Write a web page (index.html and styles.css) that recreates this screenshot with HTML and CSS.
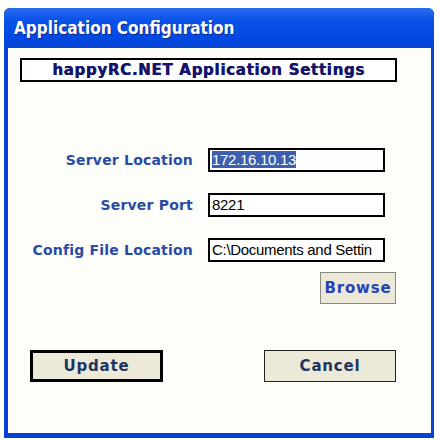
FILE: index.html
```html
<!DOCTYPE html>
<html>
<head>
    <meta charset="UTF-8" />
    <title>Application Configuration</title>
    <link rel="stylesheet" href="styles.css">
</head>
<body>
    <div class="window">
        <div class="title-bar">Application Configuration</div>
        <div class="content">
            <div class="heading">happyRC.NET Application Settings</div>

            <div class="form">
                <label class="label">Server Location</label>
                <div class="field"><span class="selected">172.16.10.13</span></div>

                <label class="label">Server Port</label>
                <div class="field">8221</div>

                <label class="label">Config File Location</label>
                <div class="field">C:\Documents and Settin</div>
            </div>

            <div class="browse-row">
                <button class="btn browse">Browse</button>
            </div>

            <div class="actions">
                <button class="btn default">Update</button>
                <button class="btn">Cancel</button>
            </div>
        </div>
    </div>
</body>
</html>
```

FILE: styles.css
```css
* {
    margin: 0;
    padding: 0;
    box-sizing: border-box;
}
body {
    background-color: white;
    font-family: "DejaVu Sans", Verdana, sans-serif;
}
.window {
    width: 430px;
    height: 430px;
    margin: 8px 0 0 4px;
    background-color: #0a3fd8;
    padding: 0 3px 5px 4px;
    border-radius: 6px 6px 0 0;
    display: flex;
    flex-direction: column;
}
.title-bar {
    height: 40px;
    margin: 0 -3px 0 -4px;
    padding: 0 0 0 10px;
    border-radius: 6px 6px 0 0;
    background: linear-gradient(#2a6cf0, #0a52e8 30%, #0048e0 80%, #0a44d0);
    color: white;
    font-family: "DejaVu Sans Condensed", "DejaVu Sans", sans-serif;
    font-weight: bold;
    font-size: 17px;
    line-height: 40px;
    text-shadow: 1px 1px 0 #0a2a8a;
}
.content {
    flex: 1;
    background-color: #fdfefa;
    padding-top: 10px;
}
.heading {
    width: 377px;
    height: 24px;
    margin-left: 12px;
    border: 2px solid black;
    background-color: white;
    color: #14146a;
    font-weight: bold;
    font-size: 15px;
    letter-spacing: 0.7px;
    line-height: 20px;
    text-align: center;
    text-shadow: 0.5px 0 0 #14146a;
}
.form {
    display: grid;
    grid-template-columns: 185px 177px;
    column-gap: 15px;
    row-gap: 21px;
    margin-top: 66px;
}
.label {
    text-align: right;
    color: #2a4aa6;
    font-weight: bold;
    font-size: 14px;
    line-height: 24px;
    letter-spacing: 0.2px;
}
.field {
    height: 24px;
    border: 2px solid black;
    background-color: white;
    padding-left: 2px;
    font-family: "Liberation Sans", Arial, sans-serif;
    font-size: 15px;
    letter-spacing: -0.3px;
    line-height: 20px;
    white-space: nowrap;
    overflow: hidden;
}
.selected {
    background-color: #3d5fae;
    color: white;
}
.browse-row {
    display: flex;
    justify-content: flex-end;
    padding-right: 35px;
    margin-top: 10px;
}
.btn {
    height: 32px;
    background-color: #ece9d8;
    border: 1px solid #222;
    font-family: "DejaVu Sans", Verdana, sans-serif;
    font-weight: bold;
    font-size: 15px;
    letter-spacing: 0.8px;
    color: #1f3461;
    width: 132px;
}
.browse {
    width: 76px;
    border-color: #8a8a80;
    color: #2444b4;
}
.actions {
    display: flex;
    justify-content: space-between;
    padding: 0 35px 0 22px;
    margin-top: 46px;
}
.default {
    width: 133px;
    border: 3px solid black;
}
```
